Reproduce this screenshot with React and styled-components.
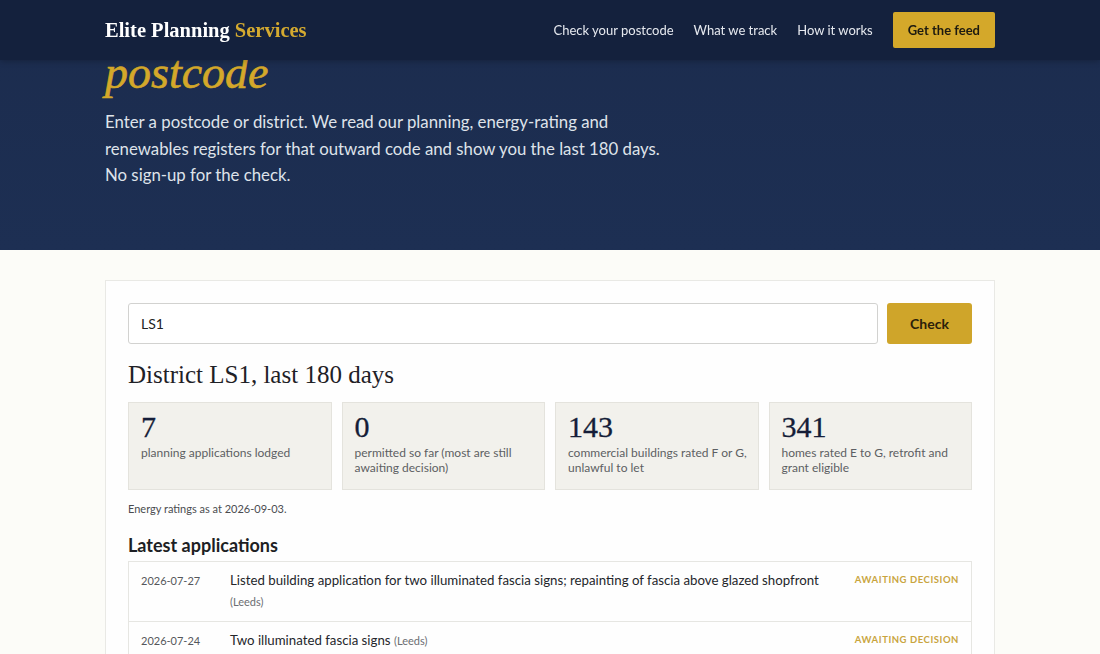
import React, { useLayoutEffect, useRef } from 'react'
import styled, { createGlobalStyle } from 'styled-components'

const GlobalStyle = createGlobalStyle`
  html, body {
    margin: 0;
    padding: 0;
    background: #fcfcf8;
  }
  body {
    font-family: Lato, "Open Sans", sans-serif;
    color: #23262d;
  }
  * { box-sizing: border-box; }
`

// the page scrolls inside this shell so the header can stay pinned
const Shell = styled.div`
  height: 100vh;
  overflow-y: auto;
  scrollbar-width: none;
  &::-webkit-scrollbar { display: none; }
`

const Header = styled.header`
  position: sticky;
  top: 0;
  z-index: 10;
  height: 60px;
  background: #14213d;
  box-shadow: 0 1px 6px rgba(0, 0, 0, 0.25);
`

const Inner = styled.div`
  width: 890px;
  margin: 0 auto;
`

const HeaderInner = styled(Inner)`
  height: 100%;
  display: flex;
  align-items: center;
  justify-content: space-between;
`

const Logo = styled.div`
  font-family: "Liberation Serif", serif;
  font-weight: 700;
  font-size: 20.5px;
  color: #ffffff;
  span { color: #d4aa30; }
`

const Nav = styled.nav`
  display: flex;
  align-items: center;
  gap: 20px;
`

const NavLink = styled.a`
  font-size: 13px;
  color: #e6e9ef;
  text-decoration: none;
`

const FeedButton = styled.a`
  background: #d4a82a;
  color: #1d1a10;
  font-size: 13px;
  font-weight: 700;
  text-decoration: none;
  padding: 0 15px;
  border-radius: 2px;
  height: 36px;
  display: flex;
  align-items: center;
`

const Hero = styled.section`
  background: linear-gradient(180deg, #1b2b4c 0%, #1d2f53 100%);
  padding: 70px 0 61px;
`

const HeroTitle = styled.h1`
  margin: 0 0 9px;
  font-family: "Liberation Serif", serif;
  font-weight: 400;
  font-size: 46px;
  line-height: 55px;
  color: #ffffff;
  em {
    color: #d4a82a;
    font-style: italic;
    -webkit-text-stroke: 0.6px #d4a82a;
  }
`

const HeroText = styled.p`
  margin: 0;
  max-width: 565px;
  font-size: 16.8px;
  line-height: 26.5px;
  color: #dfe3ea;
`

const Main = styled.main`
  padding: 30px 0 60px;
`

const Card = styled.div`
  background: #fefefe;
  border: 1px solid #e9e9e5;
  padding: 22px 22px 30px;
`

const SearchRow = styled.form`
  display: flex;
  gap: 9px;
`

const Input = styled.input`
  flex: 1;
  height: 41px;
  border: 1px solid #d2d2d0;
  border-radius: 3px;
  padding: 0 12px;
  font-family: inherit;
  font-size: 14px;
  color: #222;
  background: #ffffff;
`

const CheckButton = styled.button`
  width: 85px;
  height: 41px;
  border: none;
  border-radius: 3px;
  background: #cfa52a;
  color: #2a200a;
  font-family: inherit;
  font-weight: 700;
  font-size: 14px;
`

const District = styled.h2`
  margin: 16px 0 12px;
  font-family: "Liberation Serif", serif;
  font-weight: 400;
  font-size: 25px;
  line-height: 30px;
  color: #1f2126;
`

const Stats = styled.div`
  display: grid;
  grid-template-columns: repeat(4, 1fr);
  gap: 10px;
`

const Stat = styled.div`
  background: #f2f1ec;
  border: 1px solid #e4e3dd;
  height: 88px;
  padding: 7px 6px 8px 12px;
`

const StatNumber = styled.div`
  font-family: "Liberation Serif", serif;
  font-size: 30px;
  line-height: 34px;
  color: #151d38;
  -webkit-text-stroke: 0.3px #151d38;
`

const StatLabel = styled.div`
  margin-top: 1px;
  font-size: 12px;
  line-height: 15px;
  color: #5d5f63;
`

const Note = styled.p`
  margin: 12px 0 19px;
  font-size: 11px;
  color: #4a4c50;
`

const SectionTitle = styled.h3`
  margin: 0 0 5px;
  font-size: 18px;
  font-weight: 700;
  color: #1d1f24;
`

const List = styled.div`
  border: 1px solid #e6e6e2;
`

const Row = styled.div`
  display: grid;
  grid-template-columns: 89px 1fr auto;
  align-items: start;
  padding: 8px 12px 9px;
  border-top: ${(p) => (p.$first ? 'none' : '1px solid #e6e6e2')};
  min-height: 59px;
`

const RowDate = styled.div`
  font-size: 11px;
  line-height: 21px;
  color: #55575b;
`

const RowTitle = styled.div`
  font-size: 13.25px;
  line-height: 21px;
  color: #24262b;
  padding-right: 30px;
  small {
    font-size: 11px;
    color: #6c6e72;
  }
`

const Status = styled.div`
  padding-top: 1px;
  font-size: 9.5px;
  line-height: 17px;
  letter-spacing: 0.55px;
  font-weight: 700;
  color: #c9a53e;
  text-transform: uppercase;
`

const apps = [
  {
    date: '2026-07-27',
    title:
      'Listed building application for two illuminated fascia signs; repainting of fascia above glazed shopfront',
    place: 'Leeds',
    status: 'Awaiting decision',
  },
  { date: '2026-07-24', title: 'Two illuminated fascia signs', place: 'Leeds', status: 'Awaiting decision' },
  {
    date: '2026-07-18',
    title: 'Change of use of upper floors from offices to residential flats',
    place: 'Leeds',
    status: 'Awaiting decision',
  },
  { date: '2026-07-09', title: 'Replacement windows to front elevation', place: 'Leeds', status: 'Awaiting decision' },
]

const stats = [
  { n: '7', label: 'planning applications lodged' },
  { n: '0', label: 'permitted so far (most are still awaiting decision)' },
  { n: '143', label: 'commercial buildings rated F or G, unlawful to let' },
  { n: '341', label: 'homes rated E to G, retrofit and grant eligible' },
]

export default function App() {
  const shell = useRef(null)

  useLayoutEffect(() => {
    if (shell.current) shell.current.scrollTop = 140
  }, [])

  return (
    <Shell ref={shell}>
      <GlobalStyle />
      <Header>
        <HeaderInner>
          <Logo>
            Elite Planning <span>Services</span>
          </Logo>
          <Nav>
            <NavLink href="#check">Check your postcode</NavLink>
            <NavLink href="#track">What we track</NavLink>
            <NavLink href="#how">How it works</NavLink>
            <FeedButton href="#feed">Get the feed</FeedButton>
          </Nav>
        </HeaderInner>
      </Header>
      <Hero>
        <Inner>
          <HeroTitle>
            See what is changing in your
            <br />
            <em>postcode</em>
          </HeroTitle>
          <HeroText>
            Enter a postcode or district. We read our planning, energy-rating and renewables registers for that
            outward code and show you the last 180 days. No sign-up for the check.
          </HeroText>
        </Inner>
      </Hero>
      <Main id="check">
        <Inner>
          <Card>
            <SearchRow onSubmit={(e) => e.preventDefault()}>
              <Input defaultValue="LS1" />
              <CheckButton>Check</CheckButton>
            </SearchRow>
            <District>District LS1, last 180 days</District>
            <Stats>
              {stats.map((s) => (
                <Stat key={s.n}>
                  <StatNumber>{s.n}</StatNumber>
                  <StatLabel>{s.label}</StatLabel>
                </Stat>
              ))}
            </Stats>
            <Note>Energy ratings as at 2026-09-03.</Note>
            <SectionTitle>Latest applications</SectionTitle>
            <List>
              {apps.map((a, i) => (
                <Row key={a.date} $first={i === 0}>
                  <RowDate>{a.date}</RowDate>
                  <RowTitle>
                    {a.title} <small>({a.place})</small>
                  </RowTitle>
                  <Status>{a.status}</Status>
                </Row>
              ))}
            </List>
          </Card>
        </Inner>
      </Main>
    </Shell>
  )
}
